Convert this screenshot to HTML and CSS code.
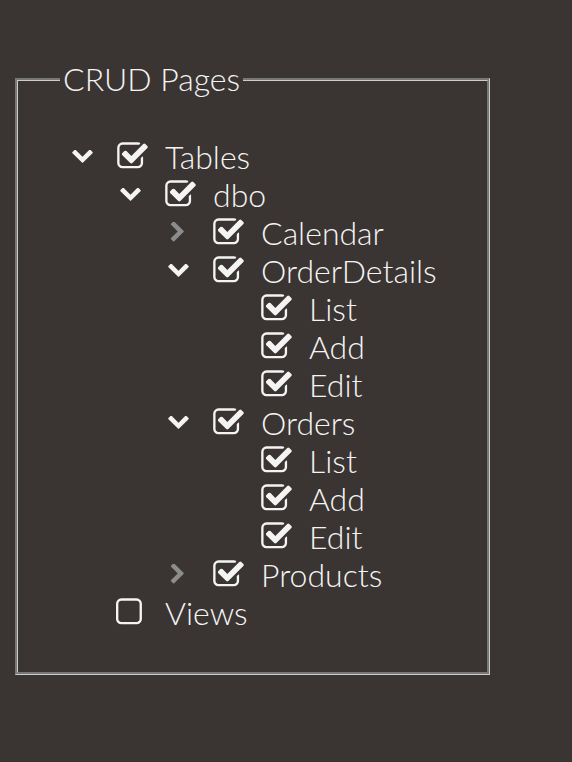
FILE: index.html
```html
<html>
    <head>
        <meta charset="utf-8">
        <title>CRUD Pages</title>
        <link rel="stylesheet" href="styles.css">
    </head>
    <body>
        <svg class="defs" width="0" height="0">
            <symbol id="ico-checked" viewBox="0 0 1792 1792">
                <path d="M1472 930v318q0 119-84.5 203.5t-203.5 84.5h-832q-119 0-203.5-84.5t-84.5-203.5v-832q0-119 84.5-203.5t203.5-84.5h832q63 0 117 25 15 7 18 23 3 17-9 29l-49 49q-10 10-23 10-3 0-9-2-23-6-45-6h-832q-66 0-113 47t-47 113v832q0 66 47 113t113 47h832q66 0 113-47t47-113v-254q0-13 9-22l64-64q10-10 23-10 6 0 12 3 20 8 20 29zm231-489l-814 814q-24 24-57 24t-57-24l-430-430q-24-24-24-57t24-57l110-110q24-24 57-24t57 24l263 263 647-647q24-24 57-24t57 24l110 110q24 24 24 57t-24 57z"/>
            </symbol>
            <symbol id="ico-empty" viewBox="0 0 1792 1792">
                <path d="M1120 256h-832q-66 0-113 47t-47 113v832q0 66 47 113t113 47h832q66 0 113-47t47-113v-832q0-66-47-113t-113-47zm288 160v832q0 119-84.5 203.5t-203.5 84.5h-832q-119 0-203.5-84.5t-84.5-203.5v-832q0-119 84.5-203.5t203.5-84.5h832q119 0 203.5 84.5t84.5 203.5z"/>
            </symbol>
            <symbol id="ico-down" viewBox="80 560 1632 1020">
                <path d="M1683 808l-742 741q-19 19-45 19t-45-19l-742-741q-19-19-19-45.5t19-45.5l166-165q19-19 45-19t45 19l531 531 531-531q19-19 45-19t45 19l166 165q19 19 19 45.5t-19 45.5z"/>
            </symbol>
            <symbol id="ico-right" viewBox="280 110 1120 1540">
                <path d="M1363 877l-742 742q-19 19-45 19t-45-19l-166-166q-19-19-19-45t19-45l531-531-531-531q-19-19-19-45t19-45l166-166q19-19 45-19t45 19l742 742q19 19 19 45t-19 45z"/>
            </symbol>
        </svg>

        <fieldset class="box">
            <legend>CRUD Pages</legend>
            <ul class="tree">
                <li>
                    <div class="row"><span class="tog"><svg class="down"><use href="#ico-down"/></svg></span><svg class="chk"><use href="#ico-checked"/></svg><span>Tables</span></div>
                    <ul>
                        <li>
                            <div class="row"><span class="tog"><svg class="down"><use href="#ico-down"/></svg></span><svg class="chk"><use href="#ico-checked"/></svg><span>dbo</span></div>
                            <ul>
                                <li>
                                    <div class="row"><span class="tog"><svg class="right"><use href="#ico-right"/></svg></span><svg class="chk"><use href="#ico-checked"/></svg><span>Calendar</span></div>
                                </li>
                                <li>
                                    <div class="row"><span class="tog"><svg class="down"><use href="#ico-down"/></svg></span><svg class="chk"><use href="#ico-checked"/></svg><span>OrderDetails</span></div>
                                    <ul>
                                        <li><div class="row"><span class="tog"></span><svg class="chk"><use href="#ico-checked"/></svg><span>List</span></div></li>
                                        <li><div class="row"><span class="tog"></span><svg class="chk"><use href="#ico-checked"/></svg><span>Add</span></div></li>
                                        <li><div class="row"><span class="tog"></span><svg class="chk"><use href="#ico-checked"/></svg><span>Edit</span></div></li>
                                    </ul>
                                </li>
                                <li>
                                    <div class="row"><span class="tog"><svg class="down"><use href="#ico-down"/></svg></span><svg class="chk"><use href="#ico-checked"/></svg><span>Orders</span></div>
                                    <ul>
                                        <li><div class="row"><span class="tog"></span><svg class="chk"><use href="#ico-checked"/></svg><span>List</span></div></li>
                                        <li><div class="row"><span class="tog"></span><svg class="chk"><use href="#ico-checked"/></svg><span>Add</span></div></li>
                                        <li><div class="row"><span class="tog"></span><svg class="chk"><use href="#ico-checked"/></svg><span>Edit</span></div></li>
                                    </ul>
                                </li>
                                <li>
                                    <div class="row"><span class="tog"><svg class="right"><use href="#ico-right"/></svg></span><svg class="chk"><use href="#ico-checked"/></svg><span>Products</span></div>
                                </li>
                            </ul>
                        </li>
                    </ul>
                </li>
                <li>
                    <div class="row"><span class="tog"></span><svg class="chk"><use href="#ico-empty"/></svg><span>Views</span></div>
                </li>
            </ul>
        </fieldset>
    </body>
</html>
```

FILE: styles.css
```css
*{
    margin: 0;
    padding: 0;
}
body{
    background-color: #3a3432;
    color: #f4f4f4;
    font-family: Lato, "Open Sans", sans-serif;
    font-weight: 300;
    font-size: 32px;
}
.defs{
    position: absolute;
}
/* 外框 */
.box{
    width: 475px;
    height: 612px;
    margin: 63px 0 0 15px;
    border: 3px groove #cccccc;
    padding: 0 0 0 42px;
    box-sizing: border-box;
}
.box legend{
    padding: 0 3px;
    font-size: 32px;
    line-height: 1;
}
/* 树 */
.tree{
    list-style: none;
    margin: 42px 0 0 12px;
}
.tree ul{
    list-style: none;
    padding-left: 48px;
}
.row{
    display: flex;
    align-items: center;
    height: 38px;
}
.tog{
    width: 44px;
    height: 38px;
    display: flex;
    align-items: center;
    flex-shrink: 0;
}
.down{
    width: 21px;
    height: 13px;
    fill: #f4f4f4;
}
.right{
    width: 14px;
    height: 20px;
    margin-left: 2px;
    fill: #8c8c8c;
}
.chk{
    width: 33px;
    height: 33px;
    fill: #f4f4f4;
    margin-right: 16px;
    flex-shrink: 0;
}
```
